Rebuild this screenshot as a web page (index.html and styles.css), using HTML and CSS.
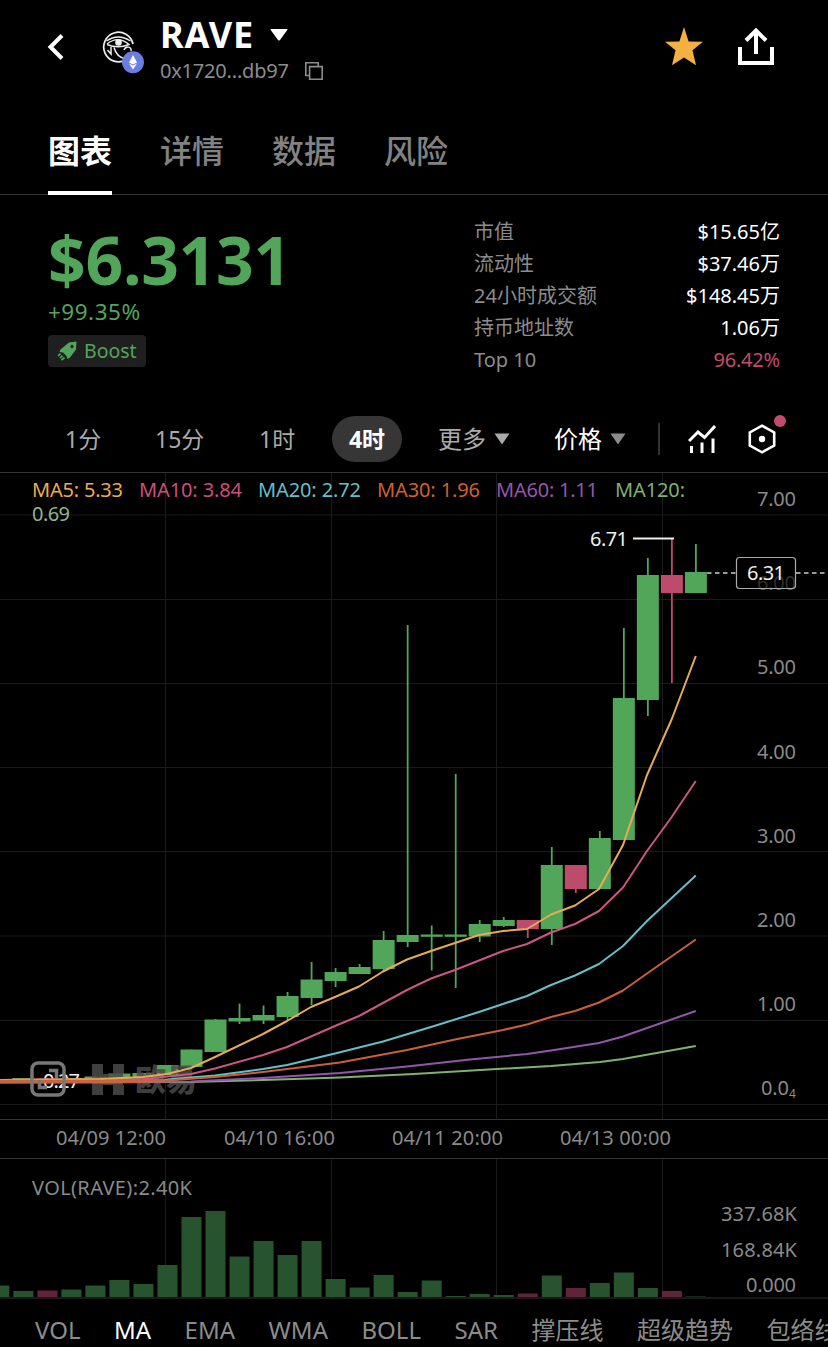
FILE: index.html
```html
<!DOCTYPE html>
<html lang="zh-CN">
<head>
<meta charset="utf-8">
<title>RAVE</title>
<link rel="stylesheet" href="styles.css">
</head>
<body>
<header class="header">
  <svg class="back" width="18" height="28" viewBox="0 0 18 28"><path d="M15 2.500L3.500 14L15 25.500" fill="none" stroke="#fff" stroke-width="4"/></svg>
  <div class="coin">
    <svg width="44" height="44" viewBox="0 0 44 44">
      <path d="M24 29.800A14.800 14.800 0 1 1 31 14" fill="none" stroke="#eee" stroke-width="1.700"/>
      <path d="M4.500 11Q16 3 28.500 11M5 14Q16 5 27 14.500Q16 19 5 14.500" fill="none" stroke="#eee" stroke-width="1.400"/>
      <circle cx="16.500" cy="12.500" r="3.300" fill="#eee"/>
      <path d="M9 17V24L5.500 20M12 17.500C14 25 18 28 24 29M22 20C24 15 30 17 29 21" fill="none" stroke="#eee" stroke-width="1.500"/>
      <circle cx="31" cy="32.300" r="11" fill="#6b7de0"/>
      <path d="M31 25L27 32.500L31 34.500L35 32.500ZM27 33.500L31 39.500L35 33.500L31 35.500Z" fill="#fff"/>
    </svg>
  </div>
  <div class="ident">
    <div class="name"><span>RAVE</span><svg width="18" height="12" viewBox="0 0 18 12"><path d="M1 0H17Q18 0 17.300 1L10 11Q9 12 8 11L.7 1Q0 0 1 0Z" fill="#fff"/></svg></div>
    <div class="addr"><span>0x1720...db97</span><svg width="18" height="18" viewBox="0 0 18 18"><path d="M4.500 13.500H.800V.800H13.200V4.500M4.600 4.600H17.200V17.200H4.600Z" fill="none" stroke="#8c8c8c" stroke-width="1.600"/></svg></div>
  </div>
  <svg class="star" width="40" height="40" viewBox="0 0 40 40"><path d="M20 0L24.600 14.500L39 14.800L28.500 23.200L32 38.200L20 30.500L8 38.200L11.500 23.200L1 14.800L15.400 14.500Z" fill="#f5b042"/></svg>
  <svg class="share" width="36" height="38" viewBox="0 0 36 38"><path d="M2 19V35H34V19M18 26V3M8 12.500L18 2.500L28 12.500" fill="none" stroke="#fff" stroke-width="4"/></svg>
</header>

<nav class="tabs">
  <span class="tab tab-on">图表</span><span class="tab">详情</span><span class="tab">数据</span><span class="tab">风险</span>
</nav>

<section class="summary">
  <div class="quote">
    <div class="price">$6.3131</div>
    <div class="change">+99.35%</div>
    <div class="boost">
      <svg width="20" height="20" viewBox="0 0 20 20"><path fill="#51a65a" fill-rule="evenodd" d="M19.500 .5L12 1.500L3.500 8.500L2.500 11L6 11.500L9.500 15L10.500 18L13 16.500L19 8.500ZM15 3.500L17 5.500L15 7.500L13 5.500Z"/><path d="M3.500 12.500L1 15M5.500 14.500L3 17M7.500 16.500L4.500 19" stroke="#51a65a" stroke-width="1.700"/></svg>
      <span>Boost</span>
    </div>
  </div>
  <dl class="stats">
    <div><dt>市值</dt><dd>$15.65亿</dd></div>
    <div><dt>流动性</dt><dd>$37.46万</dd></div>
    <div><dt>24小时成交额</dt><dd>$148.45万</dd></div>
    <div><dt>持币地址数</dt><dd>1.06万</dd></div>
    <div><dt>Top 10</dt><dd class="down">96.42%</dd></div>
  </dl>
</section>

<div class="periods">
  <span class="p-1m">1分</span>
  <span class="p-15m">15分</span>
  <span class="p-1h">1时</span>
  <span class="p-4h">4时</span>
  <span class="p-more">更多 <svg width="16" height="12" viewBox="0 0 16 12"><path d="M.5 .5H15.500L8 11.500Z" fill="#aaa"/></svg></span>
  <span class="p-price">价格 <svg width="16" height="12" viewBox="0 0 16 12"><path d="M.5 .5H15.500L8 11.500Z" fill="#8c8c8c"/></svg></span>
  <i class="divider"></i>
  <svg class="ind" width="28" height="30" viewBox="0 0 28 30"><path d="M1 17L10 8L16.500 13.500L27 2M3.500 29V22M14 29V18.500M25 29V14.500" fill="none" stroke="#fff" stroke-width="3"/></svg>
  <span class="hex">
    <svg width="28" height="30" viewBox="0 0 28 30"><path d="M14 1.700L26.200 8.400V21.600L14 28.300L1.800 21.600V8.400Z" fill="none" stroke="#fff" stroke-width="2.600"/><circle cx="14" cy="15" r="3.200" fill="#fff"/></svg>
    <i class="dot"></i>
  </span>
</div>

<svg class="chart" id="chart" width="828" height="828" viewBox="0 472 828 828">
  <path class="grid" d="M165.500 473V1119M331.500 473V1119M496.500 473V1119M662.500 473V1119M165.500 1159V1298M331.500 1159V1298M496.500 1159V1298M662.500 1159V1298M0 515H828M0 599.500H828M0 683.500H828M0 767.500H828M0 851.500H828M0 936H828M0 1020.500H828M0 1104.500H828"/>
  <path class="frame" d="M0 472.500H828M0 1119.500H828M0 1158.500H828M0 1298H828"/>
  <text class="hilo" x="43" y="1088" textLength="37">0.27</text>
  <g id="volume"></g>
  <g id="candles"></g>
  <g class="mark">
    <path d="M92 1064h11v10h10v-10h11v10h-1v11h1v10h-11v-10h-10v10h-11z"/>
    <text x="135" y="1091" textLength="62" lengthAdjust="spacingAndGlyphs">欧易</text>
  </g>
  <g class="ma">
    <polyline stroke="#7fb174" points="0,1082.500 191,1082 263,1080 340,1077.500 414,1074 497,1069 551,1066 600,1062 623,1059 695.800,1046"/>
    <polyline stroke="#9456ac" points="0,1082 191,1081.500 263,1078 340,1073 407,1066.500 470,1059.500 527,1054 551,1050.500 599,1043 623,1036.500 647,1028 695.800,1011"/>
    <polyline stroke="#66bec8" points="0,1081 167,1079.500 215,1075.500 263,1069 287,1065 335,1053.500 383,1041.500 431,1027 479,1012 527,996 551,985 575,975.500 599,964 623,946 647,921 695.800,875.500"/>
    <polyline stroke="#cb5583" points="0,1080 143,1079 191,1074 215,1068.500 263,1055 287,1047 311,1036.500 335,1026 359,1016 383,1003 407,990 431,978.500 455,970 479,960.500 503,951 527,944 551,932.500 575,924 599,911 623,887.500 647,851 671,818 695.800,781"/>
    <polyline stroke="#e9ab50" points="0,1080 100,1079 143,1077 167,1074 191,1068 215,1057 263,1034 287,1021 311,1007 335,997 359,986.500 383,971.500 407,959.500 431,951 455,943 479,935 503,931 527,929 551,914.500 575,905.500 599,889 623,845 647,775 671.800,719 695.800,656"/>
    <polyline stroke="#cb6036" points="0,1081.500 167,1080.500 215,1077 263,1072 340,1062.500 407,1050 455,1039.500 503,1030 527,1024.500 551,1017 575,1011 599,1002.500 623,990.500 647,973.500 695.800,939.500"/>
    <path d="M0 1081.500H120L165 1080.500" stroke="#cb6340" stroke-width="3.600"/>
  </g>
  <g class="mark-box">
    <rect x="32" y="1063" width="32" height="32" rx="6"/>
    <path d="M49 1070.500H56.500V1078M47 1087.500H39.500V1080"/>
  </g>
  <g class="legend">
    <text x="32" y="497" fill="#e9ab50" textLength="91">MA5: 5.33</text>
    <text x="139" y="497" fill="#cb4f7c" textLength="103">MA10: 3.84</text>
    <text x="258" y="497" fill="#66bec8" textLength="103">MA20: 2.72</text>
    <text x="377" y="497" fill="#d0612f" textLength="103">MA30: 1.96</text>
    <text x="496" y="497" fill="#9456ac" textLength="102">MA60: 1.11</text>
    <text x="615" y="497" fill="#7fb174" textLength="70">MA120:</text>
    <text x="32" y="521" fill="#91b487" textLength="38">0.69</text>
  </g>
  <path d="M707 573H736M796 573H828" stroke="#ccc" stroke-width="1.300" stroke-dasharray="4.500 3.500"/>
  <path d="M633 538.500H674" stroke="#eee" stroke-width="2"/>
  <text class="hilo" x="590" y="546" textLength="38">6.71</text>
  <g class="axis">
    <text x="757" y="506" textLength="39">7.00</text>
    <text x="757" y="590" textLength="39" opacity=".6">6.00</text>
    <text x="757" y="674" textLength="39">5.00</text>
    <text x="757" y="759" textLength="39">4.00</text>
    <text x="757" y="843" textLength="39">3.00</text>
    <text x="757" y="927" textLength="39">2.00</text>
    <text x="757" y="1011" textLength="39">1.00</text>
    <text x="761" y="1095" textLength="28">0.0</text><text class="sub" x="789" y="1098">4</text>
    <text x="56" y="1145" textLength="110">04/09 12:00</text>
    <text x="224" y="1145" textLength="111">04/10 16:00</text>
    <text x="392" y="1145" textLength="111">04/11 20:00</text>
    <text x="560" y="1145" textLength="111">04/13 00:00</text>
    <text x="32" y="1195" textLength="160">VOL(RAVE):2.40K</text>
    <text x="721" y="1221" textLength="76">337.68K</text>
    <text x="721" y="1257" textLength="76">168.84K</text>
    <text x="746" y="1292" textLength="50">0.000</text>
  </g>
  <rect x="736.500" y="557.500" width="59" height="31" rx="3" fill="#000" fill-opacity=".45" stroke="#aaa" stroke-width="1.200"/>
  <text class="hilo" x="747" y="580" textLength="38">6.31</text>
</svg>

<nav class="indicators">
  <span>VOL</span><span class="on">MA</span><span>EMA</span><span>WMA</span><span>BOLL</span><span>SAR</span><span>撑压线</span><span>超级趋势</span><span>包络线</span>
</nav>
<script src="script.js"></script>
</body>
</html>
```
FILE: styles.css
```css
* { box-sizing: border-box; }
body {
  margin: 0;
  width: 828px;
  height: 1347px;
  overflow: hidden;
  background: #000;
  color: #fff;
  font-family: "Noto Sans", "Noto Sans CJK SC", sans-serif;
  font-size: 20px;
}
svg { display: block; flex: none; }
.header { display: flex; height: 108px; padding-left: 47px; align-items: flex-start; }
.back { margin-top: 33px; }
.coin { margin: 30px 0 0 37px; }
.ident { width: 230px; margin: 13px 0 0 14px; }
.name { display: flex; align-items: center; gap: 16px; height: 43px; font-size: 36px; font-weight: 700; line-height: 43px; letter-spacing: .8px; }
.addr { display: flex; align-items: center; gap: 16px; height: 30px; color: #8c8c8c; line-height: 30px; letter-spacing: -.2px; }
.star { margin: 27px 0 0 274px; }
.share { margin: 28px 0 0 34px; }

.tabs { display: flex; gap: 48px; height: 87px; padding-left: 48px; border-bottom: 1px solid #333; }
.tab { height: 87px; padding-top: 20px; color: #828282; font-size: 32px; line-height: 46px; font-weight: 500; }
.tab-on { color: #fff; font-weight: 700; border-bottom: 4px solid #fff; }

.summary { display: flex; justify-content: space-between; height: 215px; padding: 20px 48px 0; }
.price { margin-top: 4px; height: 78px; color: #51a65a; font-size: 66px; font-weight: 700; line-height: 80px; letter-spacing: -.3px; }
.change { height: 30px; color: #51a65a; font-size: 22.5px; line-height: 30px; letter-spacing: .5px; }
.boost { display: flex; align-items: center; gap: 7px; width: 98px; height: 32px; margin-top: 8px; padding-left: 9px; border-radius: 4px; background: #1f1f1f; color: #51a65a; font-size: 19.5px; line-height: 32px; }
.stats { width: 306px; margin: 0; }
.stats div { display: flex; justify-content: space-between; height: 32px; line-height: 33px; }
.stats dt { color: #8c8c8c; }
.stats dd { margin: 0; }
.stats .down { color: #c14c6c; letter-spacing: -.2px; }

.periods { display: flex; align-items: center; height: 62px; padding: 0 0 4px 65px; color: #aaa; font-size: 23px; line-height: 46px; }
.periods span { white-space: nowrap; }
.p-1m { width: 90px; }
.p-15m { width: 104px; }
.p-1h { width: 73px; }
.p-4h { width: 70px; height: 46px; border-radius: 23px; background: #363636; color: #fff; text-align: center; font-weight: 700; }
.p-more { display: flex; align-items: center; gap: 8px; width: 116px; margin-left: 36px; font-size: 24px; }
.p-price { display: flex; align-items: center; gap: 8px; width: 104px; color: #fff; font-size: 24px; }
.divider { width: 2px; height: 32px; background: #333; }
.ind { margin-left: 28px; }
.hex { position: relative; margin-left: 32px; }
.dot { position: absolute; left: 26px; top: -9px; width: 12px; height: 12px; border-radius: 50%; background: #c14c6c; }

.grid { fill: none; stroke: #1b1b1b; }
.frame { fill: none; stroke: #333; }
.ma { fill: none; stroke-width: 2; stroke-linejoin: round; }
.axis { fill: #8a8a8a; font-size: 20px; }
.axis .sub { font-size: 12px; }
.legend { font-size: 20px; }
.hilo { fill: #eee; font-size: 20px; }
.mark { fill: #4a4a4a; fill-opacity: .85; font-size: 31px; font-weight: 900; }
.mark-box { fill: none; stroke: #777; stroke-width: 3.5; }
.up-body { fill: #51a65a; }
.down-body { fill: #bd4b6b; }
.up-volume { fill: #27532f; }
.down-volume { fill: #5f2438; }

.indicators { display: flex; gap: 33.5px; height: 47px; padding: 13px 0 0 35px; color: #8c8c8c; font-size: 24px; line-height: 34px; white-space: nowrap; overflow: hidden; }
.indicators span { flex: none; }
.indicators .on { color: #fff; }
```
FILE: script.js
```js
// Newest first: [bodyTop, bodyBottom, high, low, volumeTop, falling]
const bars = [
  [572, 593, 544, 593, 1296.5], [575, 593, 539, 683, 1291, 1],
  [575, 700, 558, 716, 1288], [698, 840, 628, 840, 1272.5],
  [838, 889, 831, 889, 1283], [865, 889, 865, 893, 1288, 1],
  [865, 929, 847, 945, 1275.5], [920, 929, 920, 938, 1293.5, 1],
  [920, 926, 917, 927, 1295], [924, 936.5, 920, 942, 1294],
  [934.5, 936.8, 774, 988, 1296], [934.5, 936.8, 925.5, 970.5, 1280.5],
  [935, 942, 625, 947, 1292], [940, 969, 931, 971, 1275],
  [967, 974, 964, 974, 1287.5], [972, 981, 968, 987, 1279],
  [979.5, 998, 962, 1005, 1241], [996, 1017, 992, 1020, 1255],
  [1015, 1020.5, 1005.5, 1024, 1241], [1018, 1021.5, 1003.5, 1024, 1256.5],
  [1019.5, 1052, 1019, 1052, 1211], [1049.5, 1067, 1049.5, 1067, 1217],
  [1065, 1075, 1065, 1075, 1265], [1073, 1077, 1073, 1077, 1284],
  [1073.5, 1078, 1073.5, 1078, 1280], [1076.5, 1079, 1076, 1079, 1285.5],
  [1078, 1080, 1078, 1080, 1289.5], [1078.5, 1081, 1078, 1081, 1290.5, 1],
  [1078, 1080, 1078, 1080, 1291], [1079, 1080.5, 1079, 1080.5, 1285.5]
];
const candles = document.getElementById("candles");
const volume = document.getElementById("volume");
function rect(parent, x, y, w, h, cls) {
  const r = document.createElementNS("http://www.w3.org/2000/svg", "rect");
  r.setAttribute("x", x);
  r.setAttribute("y", y);
  r.setAttribute("width", w);
  r.setAttribute("height", h);
  r.setAttribute("class", cls);
  parent.appendChild(r);
}
bars.forEach(([top, bottom, high, low, vol, falling], i) => {
  const x = 695.9 - 24.02 * i;
  const dir = falling ? "down" : "up";
  rect(candles, x - 11, top, 22, bottom - top, dir + "-body");
  rect(candles, x - 0.9, high, 1.8, low - high, dir + "-body");
  rect(volume, x - 10, vol, 20, 1297 - vol, dir + "-volume");
});
```
